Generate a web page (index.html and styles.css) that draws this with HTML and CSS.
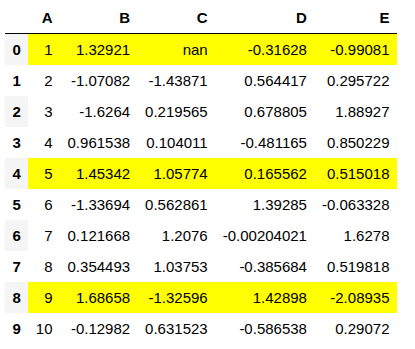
FILE: index.html
```html
<!DOCTYPE html>
<html>
<head>
<meta charset="utf-8">
<link rel="stylesheet" href="styles.css">
</head>
<body>
<div class="page">
<table class="df">
  <thead>
    <tr><th class="blank"></th><th>A</th><th>B</th><th>C</th><th>D</th><th>E</th></tr>
  </thead>
  <tbody>
    <tr class="hl"><th>0</th><td>1</td><td>1.32921</td><td>nan</td><td>-0.31628</td><td>-0.99081</td></tr>
    <tr><th>1</th><td>2</td><td>-1.07082</td><td>-1.43871</td><td>0.564417</td><td>0.295722</td></tr>
    <tr><th>2</th><td>3</td><td>-1.6264</td><td>0.219565</td><td>0.678805</td><td>1.88927</td></tr>
    <tr><th>3</th><td>4</td><td>0.961538</td><td>0.104011</td><td>-0.481165</td><td>0.850229</td></tr>
    <tr class="hl"><th>4</th><td>5</td><td>1.45342</td><td>1.05774</td><td>0.165562</td><td>0.515018</td></tr>
    <tr><th>5</th><td>6</td><td>-1.33694</td><td>0.562861</td><td>1.39285</td><td>-0.063328</td></tr>
    <tr><th>6</th><td>7</td><td>0.121668</td><td>1.2076</td><td>-0.00204021</td><td>1.6278</td></tr>
    <tr><th>7</th><td>8</td><td>0.354493</td><td>1.03753</td><td>-0.385684</td><td>0.519818</td></tr>
    <tr class="hl"><th>8</th><td>9</td><td>1.68658</td><td>-1.32596</td><td>1.42898</td><td>-2.08935</td></tr>
    <tr><th>9</th><td>10</td><td>-0.12982</td><td>0.631523</td><td>-0.586538</td><td>0.29072</td></tr>
  </tbody>
</table>
</div>
</body>
</html>
```

FILE: styles.css
```css
html, body {
  margin: 0;
  padding: 0;
  background: #fff;
}
.page {
  padding: 2px 0 0 5px;
}
.df {
  border-collapse: collapse;
  border-spacing: 0;
  font-family: "Liberation Sans", Arial, sans-serif;
  font-size: 15px;
  color: #000;
}
.df th, .df td {
  padding: 7px 7.5px;
  line-height: 17px;
  text-align: right;
  vertical-align: middle;
  white-space: nowrap;
}
.df th {
  font-weight: bold;
}
.df td {
  font-weight: normal;
}
.df thead tr {
  border-bottom: 1px solid #000;
}
.df tbody tr:nth-child(odd) th {
  background: #f5f5f5;
}
.df tbody tr.hl td {
  background: #ffff00;
}
```
